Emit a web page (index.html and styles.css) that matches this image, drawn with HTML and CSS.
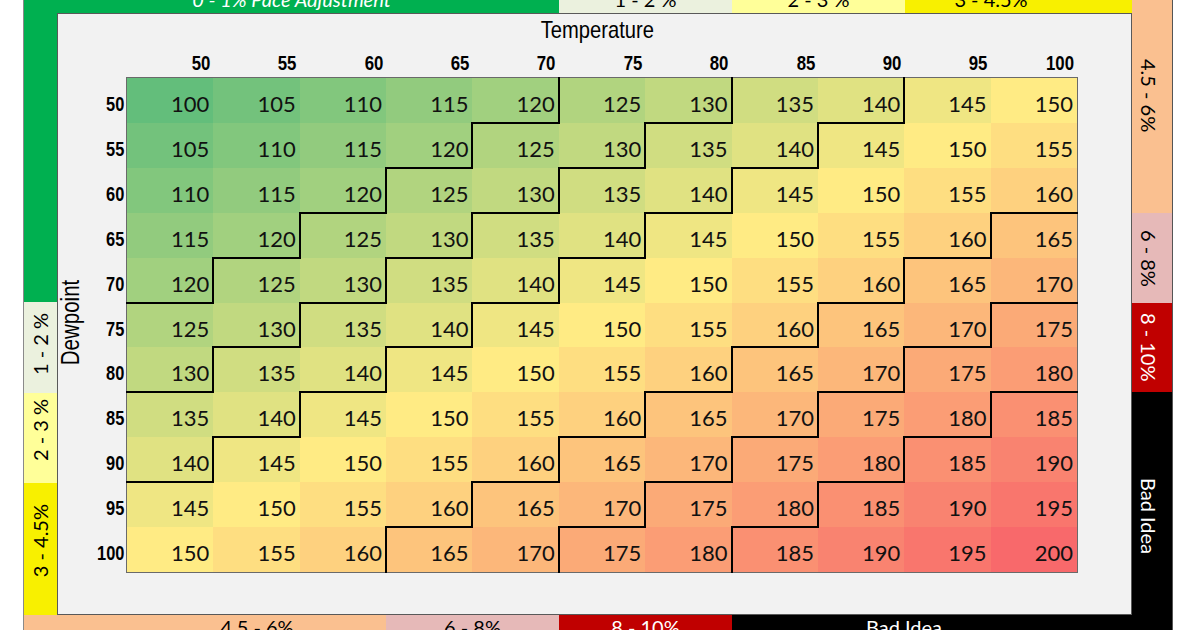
FILE: index.html
```html
<!DOCTYPE html>
<html>
<head>
<meta charset="utf-8">
<link rel="stylesheet" href="styles.css">
</head>
<body>
<div class="frame">
  <div class="topband">
    <div class="seg green w-g"><span class="lbl italic">0 - 1% Pace Adjustment</span></div>
    <div class="seg pale w-173"><span class="lbl">1 - 2 %</span></div>
    <div class="seg lyellow w-173"><span class="lbl">2 - 3 %</span></div>
    <div class="seg yellow w-y"><span class="lbl">3 - 4.5%</span></div>
  </div>

  <div class="leftband">
    <div class="vseg green h-g"></div>
    <div class="vseg pale h-12"><span class="lbl up">1 - 2 %</span></div>
    <div class="vseg lyellow h-23"><span class="lbl up">2 - 3 %</span></div>
    <div class="vseg yellow h-34"><span class="lbl up">3 - 4.5%</span></div>
  </div>

  <div class="panel">
    <div class="chart">
      <div class="title"><span>Temperature</span></div>
      <div class="colhead">
        <div><span>50</span></div><div><span>55</span></div><div><span>60</span></div><div><span>65</span></div><div><span>70</span></div><div><span>75</span></div><div><span>80</span></div><div><span>85</span></div><div><span>90</span></div><div><span>95</span></div><div><span>100</span></div>
      </div>
      <div class="dew"><span>Dewpoint</span></div>
      <div class="rowhead">
        <div><span>50</span></div><div><span>55</span></div><div><span>60</span></div><div><span>65</span></div><div><span>70</span></div><div><span>75</span></div><div><span>80</span></div><div><span>85</span></div><div><span>90</span></div><div><span>95</span></div><div><span>100</span></div>
      </div>
      <div class="grid">
        <div class="c v100">100</div><div class="c v105">105</div><div class="c v110">110</div><div class="c v115">115</div><div class="c v120 r b">120</div><div class="c v125">125</div><div class="c v130 r b">130</div><div class="c v135">135</div><div class="c v140 r b">140</div><div class="c v145">145</div><div class="c v150">150</div>

        <div class="c v105">105</div><div class="c v110">110</div><div class="c v115">115</div><div class="c v120 r b">120</div><div class="c v125">125</div><div class="c v130 r b">130</div><div class="c v135">135</div><div class="c v140 r b">140</div><div class="c v145">145</div><div class="c v150">150</div><div class="c v155">155</div>

        <div class="c v110">110</div><div class="c v115">115</div><div class="c v120 r b">120</div><div class="c v125">125</div><div class="c v130 r b">130</div><div class="c v135">135</div><div class="c v140 r b">140</div><div class="c v145">145</div><div class="c v150">150</div><div class="c v155">155</div><div class="c v160 b">160</div>

        <div class="c v115">115</div><div class="c v120 r b">120</div><div class="c v125">125</div><div class="c v130 r b">130</div><div class="c v135">135</div><div class="c v140 r b">140</div><div class="c v145">145</div><div class="c v150">150</div><div class="c v155">155</div><div class="c v160 r b">160</div><div class="c v165">165</div>

        <div class="c v120 r b">120</div><div class="c v125">125</div><div class="c v130 r b">130</div><div class="c v135">135</div><div class="c v140 r b">140</div><div class="c v145">145</div><div class="c v150">150</div><div class="c v155">155</div><div class="c v160 r b">160</div><div class="c v165">165</div><div class="c v170 b">170</div>

        <div class="c v125">125</div><div class="c v130 r b">130</div><div class="c v135">135</div><div class="c v140 r b">140</div><div class="c v145">145</div><div class="c v150">150</div><div class="c v155">155</div><div class="c v160 r b">160</div><div class="c v165">165</div><div class="c v170 r b">170</div><div class="c v175">175</div>

        <div class="c v130 r b">130</div><div class="c v135">135</div><div class="c v140 r b">140</div><div class="c v145">145</div><div class="c v150">150</div><div class="c v155">155</div><div class="c v160 r b">160</div><div class="c v165">165</div><div class="c v170 r b">170</div><div class="c v175">175</div><div class="c v180 b">180</div>

        <div class="c v135">135</div><div class="c v140 r b">140</div><div class="c v145">145</div><div class="c v150">150</div><div class="c v155">155</div><div class="c v160 r b">160</div><div class="c v165">165</div><div class="c v170 r b">170</div><div class="c v175">175</div><div class="c v180 r b">180</div><div class="c v185">185</div>

        <div class="c v140 r b">140</div><div class="c v145">145</div><div class="c v150">150</div><div class="c v155">155</div><div class="c v160 r b">160</div><div class="c v165">165</div><div class="c v170 r b">170</div><div class="c v175">175</div><div class="c v180 r b">180</div><div class="c v185">185</div><div class="c v190">190</div>

        <div class="c v145">145</div><div class="c v150">150</div><div class="c v155">155</div><div class="c v160 r b">160</div><div class="c v165">165</div><div class="c v170 r b">170</div><div class="c v175">175</div><div class="c v180 r b">180</div><div class="c v185">185</div><div class="c v190">190</div><div class="c v195">195</div>

        <div class="c v150">150</div><div class="c v155">155</div><div class="c v160 r">160</div><div class="c v165">165</div><div class="c v170 r">170</div><div class="c v175">175</div><div class="c v180 r">180</div><div class="c v185">185</div><div class="c v190">190</div><div class="c v195">195</div><div class="c v200">200</div>
      </div>
    </div>
  </div>

  <div class="rightband">
    <div class="vseg orange h-r1"><span class="lbl down">4.5 - 6%</span></div>
    <div class="vseg pink h-r2"><span class="lbl down">6 - 8%</span></div>
    <div class="vseg red h-r3"><span class="lbl down">8 - 10%</span></div>
    <div class="vseg black h-r4"><span class="lbl down">Bad Idea</span></div>
  </div>

  <div class="bottomband">
    <div class="seg orange w-o"><span class="lbl">4.5 - 6%</span></div>
    <div class="seg pink w-173"><span class="lbl">6 - 8%</span></div>
    <div class="seg red w-173"><span class="lbl">8 - 10%</span></div>
    <div class="seg black w-k"><span class="lbl">Bad Idea</span></div>
  </div>
</div>
</body>
</html>
```

FILE: styles.css
```css
* { box-sizing: border-box; margin: 0; padding: 0; }
html, body { width: 1200px; height: 630px; overflow: hidden; background: #ffffff; }
body { font-family: Lato, "Open Sans", sans-serif; color: #000; }

.frame {
  margin-left: 23px;
  width: 1150px;
  height: 640px;
  display: grid;
  grid-template-columns: 33px 1075px 41px;
  grid-template-rows: 13px 602px 25px;
  border-left: 1px solid #8a8a8a;
}

/* colours */
.green { background: #00b050; color: #fff; }
.pale { background: #ebf1de; }
.lyellow { background: #ffff99; }
.yellow { background: #f8f000; }
.orange { background: #fac090; }
.pink { background: #e6b9b8; }
.red { background: #c00000; color: #fff; }
.black { background: #000; color: #fff; }

.lbl { font-family: Lato, "Open Sans", sans-serif; font-size: 20px; line-height: 23px; white-space: nowrap; }
.italic { font-style: italic; }
.up { writing-mode: vertical-rl; transform: rotate(180deg); }
.down { writing-mode: vertical-rl; }

/* top band */
.topband { grid-row: 1; grid-column: 1 / 3; display: flex; }
.topband .seg { display: flex; justify-content: center; align-items: flex-end; padding-bottom: 2px; }
.w-g { width: 535px; }
.w-173 { width: 173px; }
.w-y { width: 227px; padding-right: 55px; }

/* left band */
.leftband { grid-row: 2; grid-column: 1; display: flex; flex-direction: column; }
.vseg { display: flex; align-items: center; justify-content: center; }
.h-g { height: 289px; }
.h-12 { height: 91px; padding-bottom: 7px; }
.h-23 { height: 90px; padding-bottom: 16px; }
.h-34 { flex: 1; padding-bottom: 16px; }

/* right band */
.rightband { grid-row: 1 / 4; grid-column: 3; display: flex; flex-direction: column; border-right: 1px solid #555; }
.rightband .vseg { padding-right: 8px; }
.h-r1 { height: 213px; padding-bottom: 22px; }
.h-r2 { height: 90px; }
.h-r3 { height: 89px; }
.h-r4 { flex: 1; }

/* bottom band */
.bottomband { grid-row: 3; grid-column: 1 / 3; display: flex; }
.bottomband .seg { display: flex; justify-content: center; align-items: flex-start; padding-top: 1px; }
.w-o { width: 362px; padding-left: 104px; }
.w-k { width: 400px; padding-right: 56px; }

/* panel */
.panel { grid-row: 2; grid-column: 2; background: #f2f2f2; border: 1px solid #595959; }
.chart {
  display: grid;
  grid-template-columns: 24px 45px 950px;
  grid-template-rows: 33px 31px 494px;
  font-family: "Liberation Sans", Arial, sans-serif;
}
.chart .title span,
.chart .colhead span,
.chart .rowhead span,
.chart .dew span { display: inline-block; white-space: nowrap; }

.title {
  grid-column: 1 / 4; grid-row: 1;
  text-align: center; padding-left: 59px; padding-top: 3px;
  font-size: 24px; line-height: 26px;
}
.title span { transform: scaleX(0.84); }

.colhead {
  grid-column: 3; grid-row: 2;
  display: grid; grid-template-columns: repeat(11, 1fr);
  font-weight: bold; font-size: 21px; line-height: 22px;
}
.colhead div { text-align: right; padding-right: 3px; padding-top: 5px; }
.colhead span { transform: scaleX(0.8); transform-origin: 100% 50%; }

.dew {
  grid-column: 1; grid-row: 3;
  display: flex; align-items: center; justify-content: center; padding-bottom: 6px;
  font-size: 25px; line-height: 25px;
}
.dew span { transform: rotate(-90deg) scaleX(0.82); flex: none; }

.rowhead {
  grid-column: 2; grid-row: 3;
  display: grid; grid-template-rows: repeat(11, 1fr);
  font-weight: bold; font-size: 20px; line-height: 22px;
}
.rowhead div { text-align: right; padding-right: 3px; padding-top: 15px; }
.rowhead span { transform: scaleX(0.82); transform-origin: 100% 50%; }

.grid {
  grid-column: 3; grid-row: 3;
  display: grid;
  grid-template-columns: repeat(11, 1fr);
  grid-template-rows: repeat(11, 1fr);
  outline: 1px solid #6a6a6a;
}
.c {
  position: relative;
  display: flex; justify-content: flex-end; align-items: flex-start;
  padding: 13px 4px 0 0;
  font-family: Lato, "Open Sans", sans-serif;
  font-size: 22px; line-height: 26px; color: #111;
}
.r::after {
  content: ""; position: absolute; z-index: 1;
  top: -1px; bottom: -1px; right: -1px; width: 2px; background: #000;
}
.b::before {
  content: ""; position: absolute; z-index: 1;
  left: -1px; right: -1px; bottom: -1px; height: 2px; background: #000;
}

/* 3-colour scale: green -> yellow -> red */
.v100 { background: rgb(99,190,123); }
.v105 { background: rgb(115,194,124); }
.v110 { background: rgb(130,199,125); }
.v115 { background: rgb(146,203,126); }
.v120 { background: rgb(161,208,127); }
.v125 { background: rgb(177,212,127); }
.v130 { background: rgb(193,217,128); }
.v135 { background: rgb(208,221,129); }
.v140 { background: rgb(224,226,130); }
.v145 { background: rgb(239,230,131); }
.v150 { background: rgb(255,235,132); }
.v155 { background: rgb(254,222,129); }
.v160 { background: rgb(254,209,127); }
.v165 { background: rgb(253,196,124); }
.v170 { background: rgb(252,183,122); }
.v175 { background: rgb(251,170,119); }
.v180 { background: rgb(251,157,117); }
.v185 { background: rgb(250,144,114); }
.v190 { background: rgb(249,131,112); }
.v195 { background: rgb(249,118,109); }
.v200 { background: rgb(248,105,107); }
```
